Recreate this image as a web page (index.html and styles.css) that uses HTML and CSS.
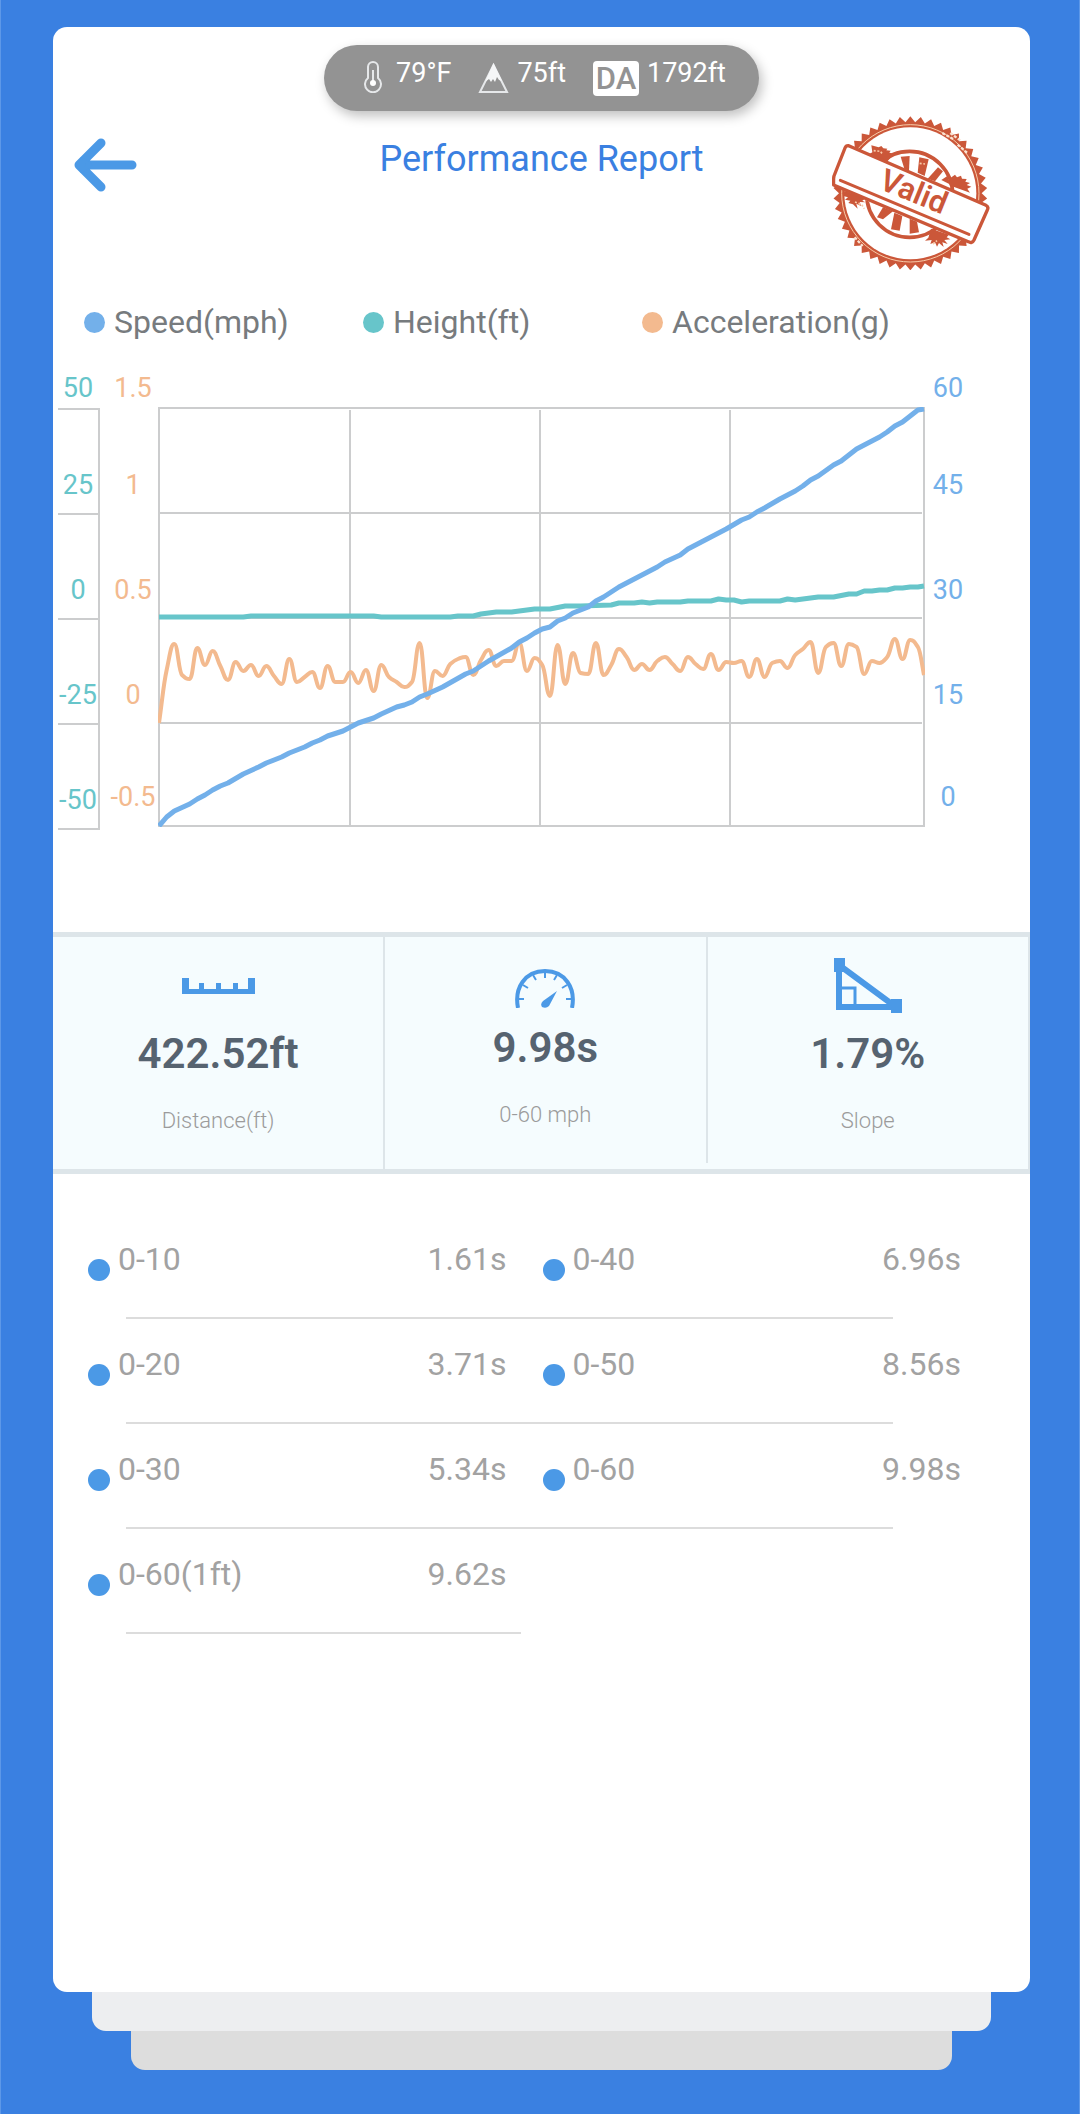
FILE: index.html
```html
<!DOCTYPE html>
<html lang="en">
<head>
  <meta charset="UTF-8">
  <meta name="viewport" content="width=device-width, initial-scale=1">
  <title>Performance Report</title>
  <link rel="stylesheet" href="styles.css">
</head>
<body>
  <main class="card">
    <div class="weather">
      <div class="weather-item">
        <svg class="weather-icon" width="24" height="32" viewBox="0 0 24 32" fill="none" stroke="#e6e8ea" stroke-width="2">
          <path d="M4 17V6a5 5 0 0 1 10 0v11a8 8 0 1 1-10 0z"/>
          <path d="M9 9v13" stroke-width="2"/>
          <circle cx="9" cy="22" r="3" fill="#fff" stroke="none"/>
        </svg>
        <span>79°F</span>
      </div>
      <div class="weather-item">
        <svg class="weather-icon" width="31" height="33" viewBox="0 0 31 33">
          <path d="M15.500 4L29 31H2z" fill="none" stroke="#e6e8ea" stroke-width="2"/>
          <path d="M15.500 2l8.500 18-3-1-2-3-2 5-2-3-2 3-2-3-4 3z" fill="#f5f6f7"/>
        </svg>
        <span>75ft</span>
      </div>
      <div class="weather-item">
        <span class="da">DA</span>
        <span>1792ft</span>
      </div>
    </div>

    <header class="header">
      <button class="back" type="button" aria-label="Back">
        <svg width="63" height="54" viewBox="0 0 63 54" fill="none" stroke="#4b99e6" stroke-width="9" stroke-linecap="round" stroke-linejoin="round">
          <path d="M58 27H7M27 5L5 27l22 22"/>
          <path d="M8 21v12l8-6z" fill="#4b99e6" stroke-width="4"/>
        </svg>
      </button>
      <h1 class="title">Performance Report</h1>
      <svg class="stamp" width="158" height="154" viewBox="97 46 474 462">
        <polygon id="teeth" fill="#cb5739"/>
        <circle cx="332" cy="278" r="198" fill="#fff"/>
        <circle cx="332" cy="278" r="206" fill="none" stroke="#f9cba8" stroke-width="3"/>
        <path d="M428 97l34 19M452 97l32 24M474 132l30 26M165 410l24 26" stroke="#fbe3d2" stroke-width="7" stroke-dasharray="9 5"/>
        <circle cx="330" cy="281" r="129" fill="none" stroke="#cb5739" stroke-width="11"/>
        <!-- spokes -->
        <g fill="#cb5739">
          <path d="M303 168l27-2-2 44-14-6z"/>
          <path d="M359 170l28 6-12 50-21-10z"/>
          <path d="M415 200l15 12-24 30-22-8z"/>
          <path d="M425 238l18-12 10 26z"/>
          <path d="M250 320l30 12-30 24-18-6z"/>
          <path d="M284 336l24 10-8 44-26-4z"/>
          <path d="M330 354l22 9 6 32-28 4z"/>
          <!-- ink splatter -->
          <path d="M215 134l22 6 8-4 6 7 12 1-3 5 13 1-4 6 15 3-22 24-54-22 10-6z"/>
          <path d="M452 232l14-10 6 8 12-5 3 9 14 1-4 8 14 4-10 6 14 5-12 6 8 12-62-22z"/>
          <path d="M134 270l62 24-8 6 9 5-17-1 4 12-14-7 4 15-14-13-14-4 6-7-16-3 9-7-14-4z"/>
          <path d="M394 384l54 18-7 8 11 6-18 2 10 12-16-5 4 14-14-12-6 11-6-13-14 5 4-12-20 2 10-9z"/>
        </g>
        <path d="M222 150l20 2 8 10M360 188l16 2M166 304l20 8 8 12M196 296l54 21M400 430l12-10" fill="none" stroke="#f9cba8" stroke-width="5" stroke-dasharray="6 5"/>
        <!-- ribbon -->
        <path d="M147 135q-8-1-11 7l-33 84q-2 7-1 27l404 170q11 7 17-5l40-90q5-9-4-14z" fill="#fff" stroke="#cb5739" stroke-width="10" stroke-linejoin="round"/>
        <path d="M122 239l386 162" stroke="#cb5739" stroke-width="9" stroke-linecap="round"/>
        <text class="stamp-text" transform="translate(234 263) rotate(22)">Valid</text>
      </svg>
    </header>

    <div class="legend">
      <div class="legend-item"><span class="legend-dot speed"></span>Speed(mph)</div>
      <div class="legend-item"><span class="legend-dot height"></span>Height(ft)</div>
      <div class="legend-item"><span class="legend-dot acceleration"></span>Acceleration(g)</div>
    </div>

    <svg class="chart" viewBox="0 0 977 480">
      <defs>
        <clipPath id="plot-area"><rect x="-1" y="-1" width="767" height="420"/></clipPath>
      </defs>

      <!-- height scale -->
      <path class="grid" d="M5 49H46M5 154H46M5 259H46M5 364H46M5 469H46M46 48V470"/>
      <g class="tick height-tick">
        <text x="25" y="37">50</text>
        <text x="25" y="134">25</text>
        <text x="25" y="239">0</text>
        <text x="25" y="344">-25</text>
        <text x="25" y="449">-50</text>
      </g>

      <g class="tick acceleration-tick">
        <text x="80" y="37">1.5</text>
        <text x="80" y="134">1</text>
        <text x="80" y="239">0.5</text>
        <text x="80" y="344">0</text>
        <text x="80" y="446">-0.5</text>
      </g>

      <g class="tick speed-tick">
        <text x="895" y="37">60</text>
        <text x="895" y="134">45</text>
        <text x="895" y="239">30</text>
        <text x="895" y="344">15</text>
        <text x="895" y="446">0</text>
      </g>

      <g transform="translate(106 48)">
        <path class="grid" d="M0 0H765V418H0ZM0 105H763M0 210H763M0 315H763M191 2V418M381 2V418M571 2V418"/>
        <g clip-path="url(#plot-area)">
          <path id="acceleration-line" class="line acceleration-line"/>
          <path id="height-line" class="line height-line"/>
          <path id="speed-line" class="line speed-line"/>
        </g>
      </g>
    </svg>

    <section class="stats">
      <div class="stat">
        <svg width="73" height="56" viewBox="0 0 73 56" fill="#4b99e6">
          <path d="M0 20h7v11h10v-6h5v6h12v-6h5v6h12v-6h5v6h10V20h7v16H0z"/>
        </svg>
        <div class="stat-value">422.52ft</div>
        <div class="stat-label">Distance(ft)</div>
      </div>
      <div class="stat">
        <svg width="60" height="50" viewBox="0 0 60 50" fill="none" stroke="#4b99e6">
          <path d="M3 50C-1 30 10 13 30 13S61 30 57 50" stroke-width="4"/>
          <path d="M30 14v6M18 17l3 5M42 17l-3 5M8 27l5 3M52 27l-5 3M4 41h5M56 41h-5" stroke-width="2"/>
          <path d="M42 33L34 48q-3 3-7 1-2-3 1-6z" fill="#4b99e6" stroke="none"/>
        </svg>
        <div class="stat-value">9.98s</div>
        <div class="stat-label">0-60 mph</div>
      </div>
      <div class="stat">
        <svg width="68" height="56" viewBox="0 0 68 56" fill="none" stroke="#4b99e6">
          <path d="M5 7V49H62Z" stroke-width="6"/>
          <path d="M6 30H21V48" stroke-width="3"/>
          <path d="M0 0h11v14H0zM57 41h11v14H57z" fill="#4b99e6" stroke="none"/>
        </svg>
        <div class="stat-value">1.79%</div>
        <div class="stat-label">Slope</div>
      </div>
    </section>

    <ul class="splits">
      <li class="split-row">
        <div class="split"><span class="dot"></span><span>0-10</span><span class="time">1.61s</span></div>
        <div class="split"><span class="dot"></span><span>0-40</span><span class="time">6.96s</span></div>
      </li>
      <li class="split-row">
        <div class="split"><span class="dot"></span><span>0-20</span><span class="time">3.71s</span></div>
        <div class="split"><span class="dot"></span><span>0-50</span><span class="time">8.56s</span></div>
      </li>
      <li class="split-row">
        <div class="split"><span class="dot"></span><span>0-30</span><span class="time">5.34s</span></div>
        <div class="split"><span class="dot"></span><span>0-60</span><span class="time">9.98s</span></div>
      </li>
      <li class="split-row single">
        <div class="split"><span class="dot"></span><span>0-60(1ft)</span><span class="time">9.62s</span></div>
      </li>
    </ul>
  </main>
  <div class="sheet sheet-one"></div>
  <div class="sheet sheet-two"></div>

  <script src="script.js"></script>
</body>
</html>
```

FILE: styles.css
```css
:root {
  --bg: #3a80e1;
  --accent: #4b99e6;
  --speed: #73b0ea;
  --height: #67c5ca;
  --acceleration: #f3ba8f;
  --grid: #cccdce;
  --border: #dde5e9;
}

* {
  box-sizing: border-box;
}

body {
  margin: 0;
  padding: 27px 49px 44px 52px;
  min-height: 100vh;
  border: solid #5d98e8;
  border-width: 0 1px;
  background-color: var(--bg);
  font-family: Roboto, "Liberation Sans", sans-serif;
}

.card {
  min-height: calc(100vh - 149px);
  padding-top: 18px;
  background: #fff;
  border-radius: 14px;
}

/* Weather pill */
.weather {
  display: flex;
  gap: 27px;
  width: fit-content;
  height: 66px;
  margin: 0 auto;
  padding: 12px 33px 0 40px;
  border-radius: 33px;
  background: #939393;
  box-shadow: 3px 5px 12px rgba(0, 0, 0, 0.25);
  color: #fff;
  font-size: 27px;
  line-height: 32px;
}

.weather-item {
  display: flex;
  align-items: flex-start;
  gap: 8px;
}

.weather-icon {
  margin-top: 4px;
}

.da {
  width: 46px;
  margin-top: 4px;
  border-radius: 4px;
  background: #fff;
  color: #939393;
  font-size: 31px;
  font-weight: 500;
  line-height: 35px;
  text-align: center;
}

/* Header */
.header {
  display: grid;
  grid-template-columns: 1fr auto 1fr;
  align-items: start;
}

.back {
  justify-self: start;
  margin: 27px 0 0 21px;
  padding: 0;
  border: none;
  background: none;
  cursor: pointer;
}

.back svg {
  display: block;
}

.title {
  margin: 28px 0 0;
  color: var(--bg);
  font-size: 36px;
  font-weight: 400;
  line-height: 40px;
}

.stamp {
  justify-self: end;
  margin: 5px 40px 0 0;
}

.stamp-text {
  fill: #cb5739;
  font-size: 93px;
  font-weight: 600;
}

/* Chart */
.legend {
  display: grid;
  grid-template-columns: repeat(3, 1fr);
  padding: 34px 109px 0 31px;
  color: #777b7e;
  font-size: 32px;
  line-height: 36px;
}

.legend-item {
  display: flex;
  align-items: center;
  gap: 9px;
}

.legend-dot {
  width: 21px;
  height: 21px;
  border-radius: 50%;
}

.legend-dot.speed {
  background: var(--speed);
}

.legend-dot.height {
  background: var(--height);
}

.legend-dot.acceleration {
  background: var(--acceleration);
}

.chart {
  display: block;
  width: 100%;
  margin: 20px 0 92px;
}

.grid {
  fill: none;
  stroke: var(--grid);
  stroke-width: 2;
}

.tick {
  font-size: 27px;
  text-anchor: middle;
}

.height-tick {
  fill: var(--height);
}

.acceleration-tick {
  fill: var(--acceleration);
}

.speed-tick {
  fill: var(--speed);
}

.line {
  fill: none;
  stroke-width: 5;
  stroke-linejoin: round;
}

.speed-line {
  stroke: var(--speed);
}

.height-line {
  stroke: var(--height);
}

.acceleration-line {
  stroke: var(--acceleration);
  stroke-width: 4;
}

/* Summary band */
.stats {
  display: grid;
  grid-template-columns: 34% 33% 33%;
  align-items: start;
  border: solid var(--border);
  border-width: 5px 0;
  background: #f5fcfe;
  text-align: center;
}

.stat {
  padding: 21px 0 33px;
  border-right: 2px solid var(--border);
}

.stat svg {
  display: block;
  margin: 0 auto;
}

.stat-value {
  margin-top: 13px;
  color: #566370;
  font-size: 42px;
  font-weight: 600;
  line-height: 54px;
}

.stat-label {
  margin-top: 25px;
  color: #9b9b9b;
  font-size: 22px;
  font-weight: 300;
  line-height: 30px;
}

/* Split times */
.splits {
  margin: 0;
  padding: 40px 69px 0 35px;
  list-style: none;
  color: #a2a2a2;
  font-size: 32px;
  line-height: 38px;
}

.split-row {
  display: grid;
  grid-template-columns: 1fr 1fr;
  column-gap: 36px;
  padding-top: 26px;
}

.split-row::after {
  content: "";
  grid-column: 1 / -1;
  height: 2px;
  margin: 36px 68px 0 38px;
  background: #dcdcdc;
}

.split-row.single::after {
  margin-right: calc(50% + 4px);
}

.split {
  display: flex;
  align-items: flex-start;
  gap: 8px;
}

.dot {
  width: 22px;
  height: 22px;
  margin-top: 19px;
  border-radius: 50%;
  background: var(--accent);
}

.time {
  margin-left: auto;
}

/* Stacked sheets under the card */
.sheet {
  height: 39px;
  border-radius: 0 0 14px 14px;
}

.sheet-one {
  margin: 0 39px;
  background: #edeef0;
}

.sheet-two {
  margin: 0 78px;
  background: #dddddd;
}
```

FILE: script.js
```javascript
// One sample every 0.1 s, the run ends at 9.98 s
const PLOT_WIDTH = 765;
const SAMPLES = 99.8;

// y positions inside the plot, one per sample
const acceleration = [
  315, 262, 236, 267, 271, 240, 257, 243, 258, 272, 254, 263, 257, 268, 258, 268, 276, 251, 274, 269,
  264, 280, 258, 274, 274, 264, 275, 262, 283, 257, 269, 274, 279, 274, 235, 290, 263, 268, 256, 251,
  249, 267, 252, 242, 258, 253, 253, 235, 263, 250, 257, 288, 237, 276, 245, 265, 266, 235, 267, 257,
  241, 249, 262, 256, 262, 253, 249, 256, 263, 249, 256, 261, 246, 262, 254, 255, 253, 269, 251, 269,
  255, 253, 260, 247, 241, 234, 265, 239, 235, 258, 236, 239, 266, 253, 255, 249, 231, 251, 232, 239
].map((y, i) => [i, y]);
acceleration.push([SAMPLES, 267]);

// [sample, y]
const speed = [
  [0, 418], [1, 409], [2, 403], [4, 396], [5, 391], [6, 387], [7, 382], [8, 378], [9, 375], [11, 366],
  [13, 359], [14, 355], [16, 349], [17, 345], [19, 339], [20, 335], [21, 332], [22, 328], [24, 323],
  [26, 315], [28, 310], [29, 306], [31, 299], [32, 297], [33, 294], [34, 289], [35, 286], [37, 279],
  [40, 266], [41, 263], [43, 253], [46, 240], [47, 234], [48, 230], [49, 225], [50, 221], [51, 219],
  [52, 213], [53, 210], [54, 205], [56, 199], [57, 193], [58, 189], [59, 184], [60, 179], [61, 175],
  [65, 159], [66, 154], [68, 147], [69, 141], [71, 133], [72, 129], [74, 121], [76, 112], [77, 109],
  [78, 104], [79, 100], [81, 91], [82, 87], [83, 83], [84, 78], [85, 72], [86, 68], [88, 57], [89, 53],
  [91, 41], [92, 37], [94, 29], [95, 24], [96, 18], [97, 14], [98, 8], [99, 2], [SAMPLES, 1]
];

const height = [
  [0, 209], [11, 209], [12, 208], [28, 208], [29, 209], [38, 209], [39, 208], [41, 208], [42, 206],
  [44, 204], [46, 204], [48, 202], [49, 201], [51, 201], [53, 198], [55, 198], [59, 197], [60, 195],
  [62, 195], [63, 194], [64, 195], [65, 194], [68, 194], [69, 193], [72, 193], [73, 191], [74, 192],
  [75, 192], [76, 194], [77, 193], [81, 193], [82, 191], [83, 192], [85, 190], [86, 189], [88, 189],
  [90, 186], [91, 186], [92, 183], [93, 183], [94, 182], [95, 182], [96, 180], [97, 180], [98, 179],
  [99, 179], [SAMPLES, 178]
];

function toPlot(points) {
  return points.map(([i, y]) => [i * PLOT_WIDTH / SAMPLES, y]);
}

function straightPath(points) {
  return 'M' + toPlot(points).map(p => p.join(' ')).join('L');
}

// Peaks keep a flat tangent so the curve never overshoots a sample
function smoothPath(points) {
  const pts = toPlot(points);
  const slopes = pts.map((p, i) => {
    if (i === 0 || i === pts.length - 1) return 0;
    const before = (p[1] - pts[i - 1][1]) / (p[0] - pts[i - 1][0]);
    const after = (pts[i + 1][1] - p[1]) / (pts[i + 1][0] - p[0]);
    return before * after <= 0 ? 0 : 2 * before * after / (before + after);
  });
  slopes[0] = (pts[1][1] - pts[0][1]) / (pts[1][0] - pts[0][0]);
  slopes[pts.length - 1] = 5;

  let d = `M${pts[0][0]} ${pts[0][1]}`;
  for (let i = 1; i < pts.length; i++) {
    const [x0, y0] = pts[i - 1];
    const [x1, y1] = pts[i];
    const step = (x1 - x0) * 0.45;
    d += `C${x0 + step} ${y0 + slopes[i - 1] * step} ${x1 - step} ${y1 - slopes[i] * step} ${x1} ${y1}`;
  }
  return d;
}

document.getElementById('acceleration-line').setAttribute('d', smoothPath(acceleration));
document.getElementById('height-line').setAttribute('d', straightPath(height));
document.getElementById('speed-line').setAttribute('d', straightPath(speed));

// Toothed edge of the stamp
const teeth = [];
for (let i = 0; i < 92; i++) {
  const angle = i * Math.PI / 46 - Math.PI / 2;
  const radius = i % 2 ? 214 : 231;
  teeth.push(`${332 + radius * Math.cos(angle)},${278 + radius * Math.sin(angle)}`);
}
document.getElementById('teeth').setAttribute('points', teeth.join(' '));
```
